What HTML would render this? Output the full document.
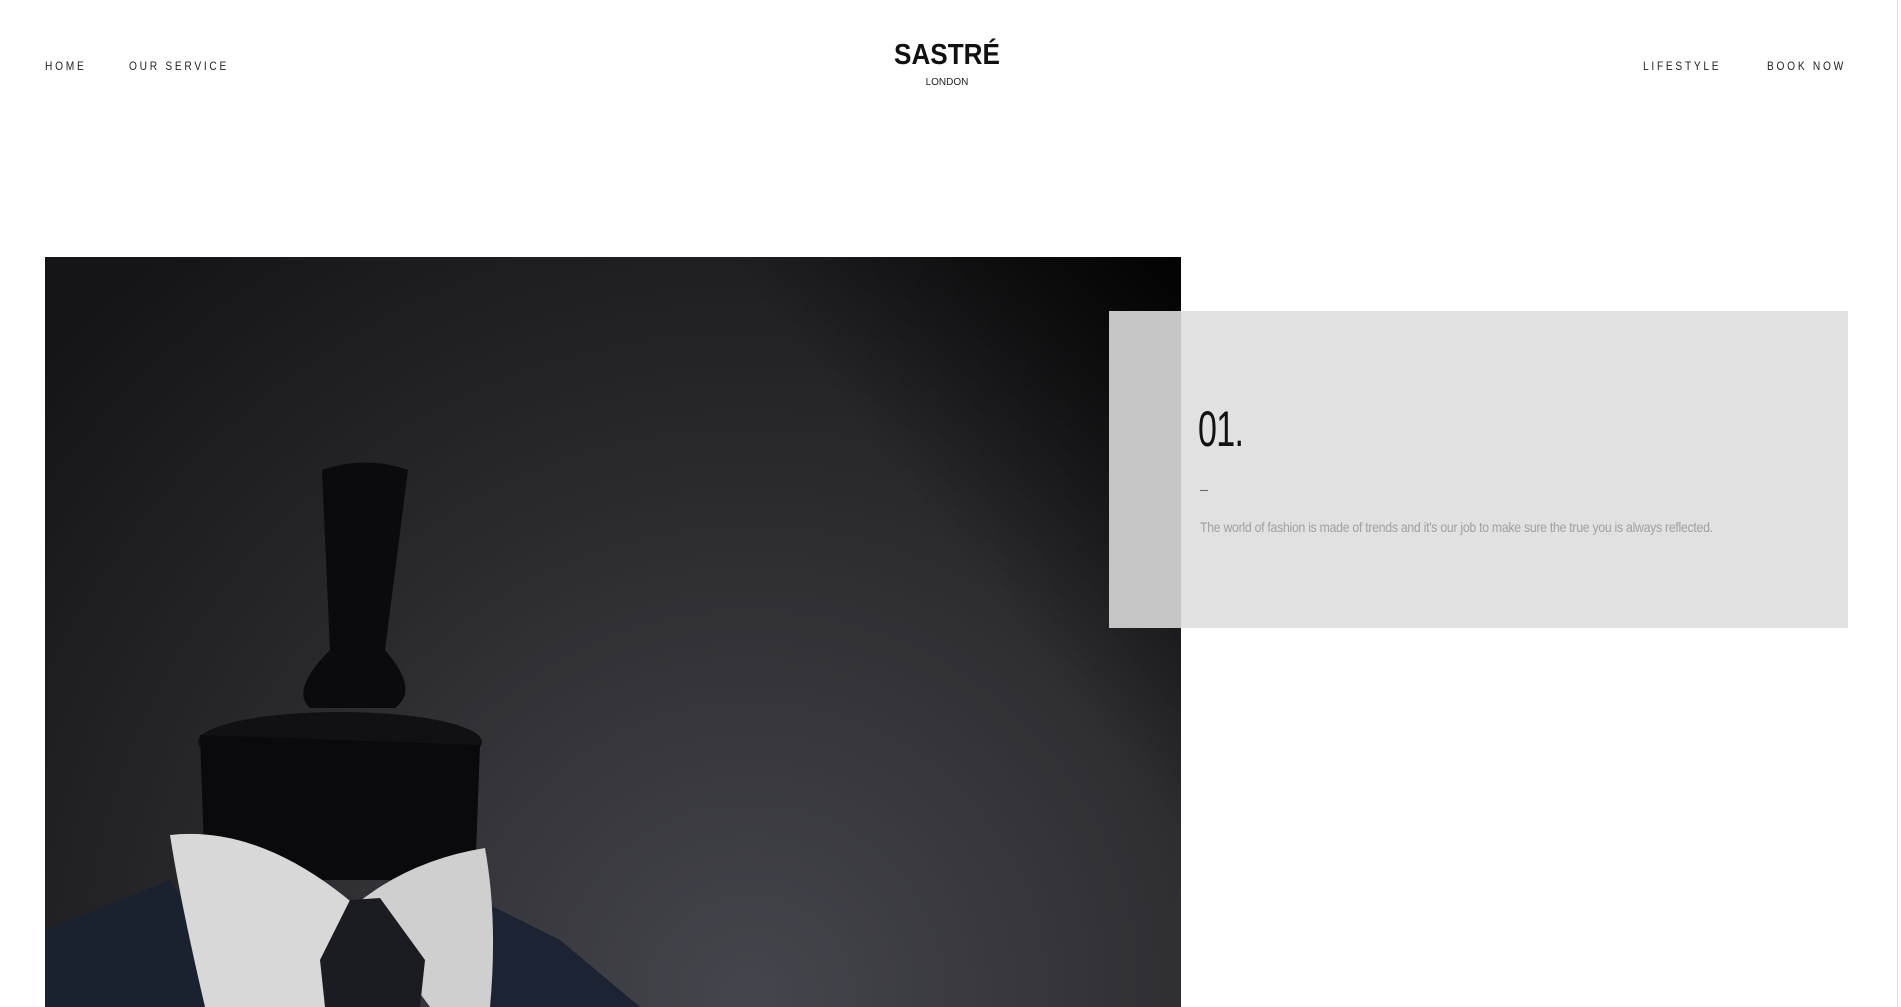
<!DOCTYPE html>
<html><head><meta charset="utf-8"><style>
*{margin:0;padding:0;box-sizing:border-box}
html,body{width:1901px;height:1007px;overflow:hidden;background:#fff;font-family:"Liberation Sans",sans-serif}
.nav{position:absolute;top:59px;font-size:12px;letter-spacing:3.2px;color:#222;line-height:14px;transform:scaleX(0.85);transform-origin:left;white-space:nowrap}
.logo{position:absolute;left:880px;width:134px;text-align:center;top:38px;font-weight:bold;font-size:29px;color:#111;letter-spacing:0;line-height:34px;transform:scaleX(0.9)}
.london{position:absolute;left:880px;width:134px;text-align:center;top:77px;font-size:10px;color:#222;line-height:12px}
.sb{position:absolute;left:1897px;top:0;width:4px;height:1007px;background:#fff;border-left:1px solid #ddd}
.box{position:absolute;left:1109px;top:311px;width:739px;height:317px;background:#e1e1e1}
.box2{position:absolute;left:1109px;top:311px;width:72px;height:317px;background:#c6c6c6}
.num{position:absolute;left:1198px;top:402px;font-size:50px;font-weight:300;color:#111;transform:scaleX(0.68);transform-origin:left;line-height:54px;letter-spacing:-1px}
.dash{position:absolute;left:1200px;top:490px;width:8px;height:1px;background:#666}
.txt{position:absolute;left:1200px;top:519px;font-size:14px;color:#a0a0a0;letter-spacing:-0.3px;transform:scaleX(0.875);transform-origin:left;white-space:nowrap;line-height:16px}
</style></head><body>
<div class="nav" style="left:45px">HOME</div>
<div class="nav" style="left:129px">OUR SERVICE</div>
<div class="nav" style="left:1643px">LIFESTYLE</div>
<div class="nav" style="left:1767px">BOOK NOW</div>
<div class="logo">SASTRÉ</div>
<div class="london">LONDON</div>
<svg style="position:absolute;left:45px;top:257px" width="1136" height="750" viewBox="45 257 1136 750">
<defs>
<radialGradient id="bg" cx="750" cy="1000" r="950" gradientUnits="userSpaceOnUse">
<stop offset="0" stop-color="#45454d"/><stop offset="0.55" stop-color="#2a2a2e"/><stop offset="1" stop-color="#151517"/>
</radialGradient>
<linearGradient id="tr" x1="1181" y1="257" x2="900" y2="480" gradientUnits="userSpaceOnUse">
<stop offset="0" stop-color="#000" stop-opacity="0.9"/><stop offset="1" stop-color="#000" stop-opacity="0"/></linearGradient>
</defs>
<rect x="45" y="257" width="1136" height="750" fill="url(#bg)"/>
<rect x="45" y="257" width="1136" height="750" fill="url(#tr)"/>
<path d="M45 930 L170 880 L250 1007 L45 1007Z" fill="#1a2230"/>
<path d="M480 900 L560 940 L640 1007 L440 1007Z" fill="#1c2433"/>
<path d="M322 470 Q365 455 408 470 L385 650 Q420 690 395 708 L310 708 Q290 690 330 650Z" fill="#0b0b0d"/>
<ellipse cx="340" cy="742" rx="142" ry="30" fill="#111113"/>
<path d="M200 735 L480 745 L475 880 L205 880Z" fill="#0a0a0c"/>
<path d="M170 835 Q260 825 355 905 L330 1007 L205 1007 Q180 900 170 835Z" fill="#d8d8d8"/>
<path d="M355 905 Q410 860 485 848 Q498 920 490 1007 L430 1007Z" fill="#cfcfcf"/>
<path d="M350 900 L380 898 L425 960 L420 1007 L325 1007 L320 960Z" fill="#1b1b22"/>
</svg>
<div class="box"></div>
<div class="box2"></div>
<div class="num">01.</div>
<div class="dash"></div>
<div class="txt">The world of fashion is made of trends and it's our job to make sure the true you is always reflected.</div>
<div class="sb"></div>
</body></html>
